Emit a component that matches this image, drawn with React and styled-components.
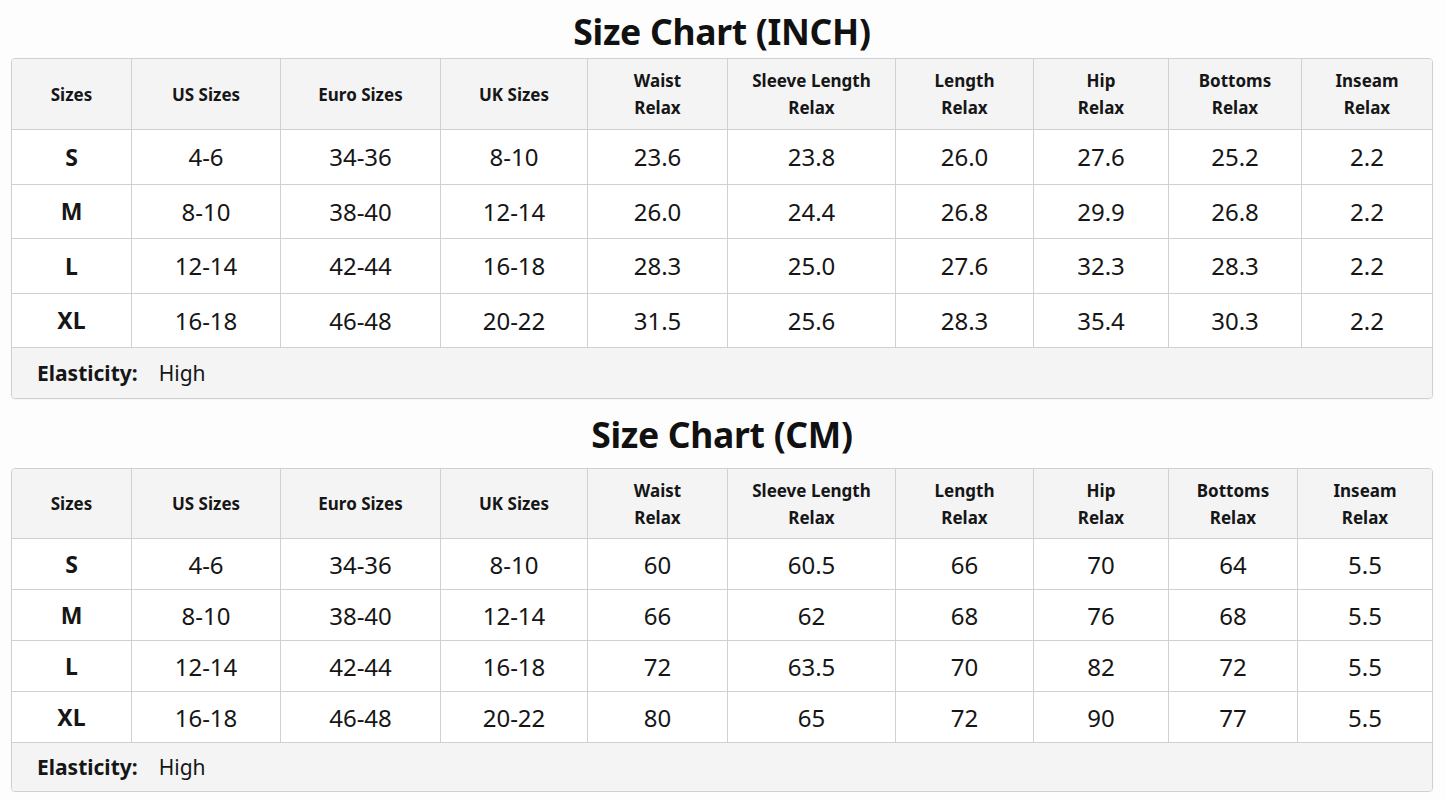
import styled, { createGlobalStyle } from 'styled-components';

const GlobalStyle = createGlobalStyle`
  html, body {
    margin: 0;
    padding: 0;
    background: #fdfdfd;
    font-family: "Noto Sans", "Open Sans", sans-serif;
    color: #161616;
  }
`;

const Page = styled.div`
  width: 1445px;
  padding: 4px 12px 0 11px;
  box-sizing: border-box;
  display: flex;
  flex-direction: column;
`;

const Title = styled.h1`
  margin: 0;
  height: ${p => p.$h}px;
  display: flex;
  align-items: center;
  justify-content: center;
  font-size: 35.5px;
  font-weight: 700;
  letter-spacing: -0.3px;
  color: #111;
`;

const Table = styled.div`
  display: grid;
  grid-template-columns: ${p => p.$cols};
  border: 1px solid #cfd0d6;
  border-radius: 4px;
  overflow: hidden;
  box-shadow: 0 1px 2px rgba(0, 0, 0, 0.04);
`;

const HeadCell = styled.div`
  height: ${p => p.$h}px;
  display: flex;
  align-items: center;
  justify-content: center;
  text-align: center;
  background: #f4f4f5;
  font-size: 17px;
  font-weight: 700;
  line-height: 27px;
  border-right: ${p => (p.$last ? 'none' : '1px solid #cfd0d6')};
  border-bottom: 1px solid #cfd0d6;
  box-sizing: border-box;
`;

const Cell = styled.div`
  height: ${p => p.$h}px;
  display: flex;
  align-items: center;
  justify-content: center;
  background: #fff;
  font-size: ${p => (p.$bold ? 23 : 24)}px;
  font-weight: ${p => (p.$bold ? 700 : 400)};
  border-right: ${p => (p.$last ? 'none' : '1px solid #cfd0d6')};
  border-bottom: 1px solid #cfd0d6;
  box-sizing: border-box;
`;

const Footer = styled.div`
  grid-column: 1 / -1;
  height: ${p => p.$h}px;
  display: flex;
  align-items: center;
  gap: 21px;
  padding-left: 25px;
  background: #f4f4f5;
  font-size: 21px;
`;

const Label = styled.span`
  font-weight: 700;
`;

const headers = [
  ['Sizes'],
  ['US Sizes'],
  ['Euro Sizes'],
  ['UK Sizes'],
  ['Waist', 'Relax'],
  ['Sleeve Length', 'Relax'],
  ['Length', 'Relax'],
  ['Hip', 'Relax'],
  ['Bottoms', 'Relax'],
  ['Inseam', 'Relax'],
];

const base = [
  ['S', '4-6', '34-36', '8-10'],
  ['M', '8-10', '38-40', '12-14'],
  ['L', '12-14', '42-44', '16-18'],
  ['XL', '16-18', '46-48', '20-22'],
];

const inch = [
  ['23.6', '23.8', '26.0', '27.6', '25.2', '2.2'],
  ['26.0', '24.4', '26.8', '29.9', '26.8', '2.2'],
  ['28.3', '25.0', '27.6', '32.3', '28.3', '2.2'],
  ['31.5', '25.6', '28.3', '35.4', '30.3', '2.2'],
];

const cm = [
  ['60', '60.5', '66', '70', '64', '5.5'],
  ['66', '62', '68', '76', '68', '5.5'],
  ['72', '63.5', '70', '82', '72', '5.5'],
  ['80', '65', '72', '90', '77', '5.5'],
];

function SizeTable({ cols, data, headH, rowH, footH }) {
  return (
    <Table $cols={cols}>
      {headers.map((h, i) => (
        <HeadCell key={i} $h={headH} $last={i === headers.length - 1}>
          <div>
            {h.map((line, j) => (
              <div key={j}>{line}</div>
            ))}
          </div>
        </HeadCell>
      ))}
      {base.map((row, r) =>
        [...row, ...data[r]].map((v, c) => (
          <Cell key={`${r}-${c}`} $h={rowH} $bold={c === 0} $last={c === 9}>
            {v}
          </Cell>
        ))
      )}
      <Footer $h={footH}>
        <Label>Elasticity:</Label>
        <span>High</span>
      </Footer>
    </Table>
  );
}

export default function App() {
  return (
    <>
      <GlobalStyle />
      <Page>
        <Title $h={54}>Size Chart (INCH)</Title>
        <SizeTable
          cols="120px 149px 160px 147px 140px 168px 138px 135px 133px 1fr"
          data={inch}
          headH={71}
          rowH={54.5}
          footH={50}
        />
        <Title $h={69}>Size Chart (CM)</Title>
        <SizeTable
          cols="120px 149px 160px 147px 140px 168px 138px 135px 129px 1fr"
          data={cm}
          headH={70}
          rowH={51}
          footH={48}
        />
      </Page>
    </>
  );
}
